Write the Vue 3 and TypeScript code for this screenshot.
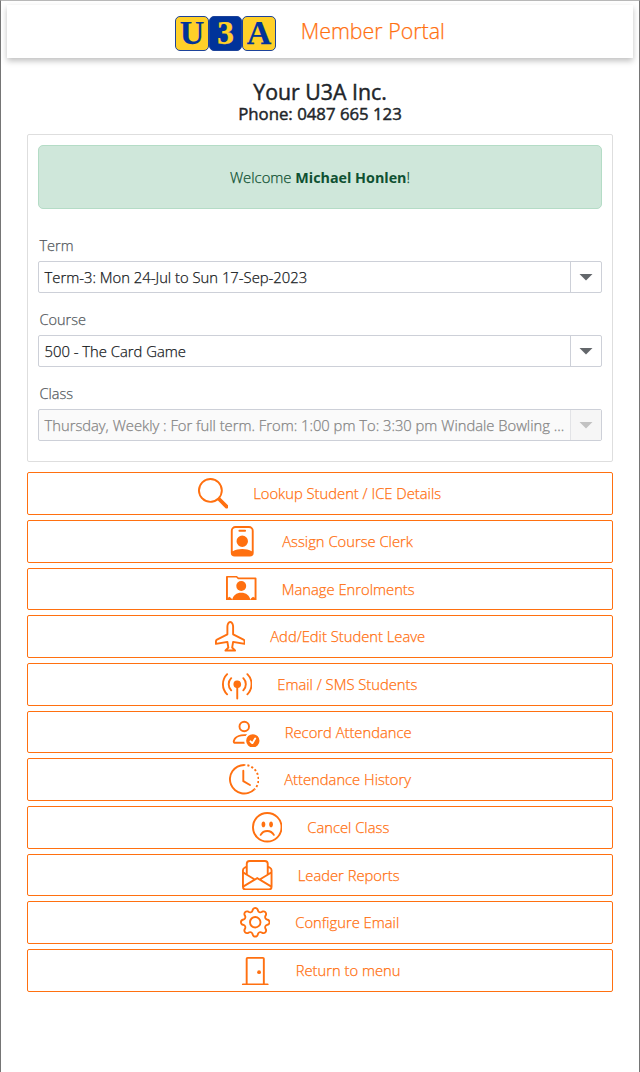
<script setup lang="ts">
interface Action {
  label: string
  key: string
  width: number
  paths: string[]
}

interface Field {
  label: string
  key: string
  value: string
  disabled?: boolean
}

const fields: Field[] = [
  { label: 'Term', key: 'term', value: 'Term-3: Mon 24-Jul to Sun 17-Sep-2023' },
  { label: 'Course', key: 'course', value: '500 - The Card Game' },
  { label: 'Class', key: 'class', value: 'Thursday, Weekly : For full term. From: 1:00 pm To: 3:30 pm Windale Bowling ...', disabled: true },
]

const actions: Action[] = [
  {
    label: 'Lookup Student / ICE Details', key: 'search', width: 189,
    paths: ['M11.742 10.344a6.5 6.5 0 1 0-1.397 1.398h-.001c.03.04.062.078.098.115l3.85 3.85a1 1 0 0 0 1.415-1.414l-3.85-3.85a1.007 1.007 0 0 0-.115-.1zM12 6.5a5.5 5.5 0 1 1-11 0 5.5 5.5 0 0 1 11 0z'],
  },
  {
    label: 'Assign Course Clerk', key: 'clerk', width: 131,
    paths: [
      'M6.5 2a.5.5 0 0 0 0 1h3a.5.5 0 0 0 0-1h-3zM11 8a3 3 0 1 1-6 0 3 3 0 0 1 6 0z',
      'M4.5 0A2.5 2.5 0 0 0 2 2.5V14a2 2 0 0 0 2 2h8a2 2 0 0 0 2-2V2.5A2.5 2.5 0 0 0 11.5 0h-7zM3 2.5A1.5 1.5 0 0 1 4.5 1h7A1.5 1.5 0 0 1 13 2.5v10.795a4.2 4.2 0 0 0-.776-.492C11.392 12.387 10.063 12 8 12s-3.392.387-4.224.803a4.2 4.2 0 0 0-.776.492V2.5z',
    ],
  },
  {
    label: 'Manage Enrolments', key: 'enrol', width: 132,
    paths: [
      'M10.6 6.3a2.6 2.6 0 1 1-5.2 0 2.6 2.6 0 0 1 5.2 0z',
      'M0 1.500Q0 1 .5 1H5.700L6.600 1.800H15.500Q16 1.800 16 2.300V13.700H12.600L13.200 12.700 14.200 11.900 15 12.500V2.700H6.300L5.400 1.900H1V12.500L1.800 11.900 2.800 12.700 3.400 13.700H0z',
      'M3.200 13.700C3.600 11.200 5.500 9.800 8 9.800s4.400 1.400 4.800 3.900z',
    ],
  },
  {
    label: 'Add/Edit Student Leave', key: 'leave', width: 155,
    paths: ['M6.428 1.151C6.708.591 7.213 0 8 0s1.292.592 1.572 1.151C9.861 1.73 10 2.431 10 3v3.691l5.17 2.585a1.5 1.5 0 0 1 .83 1.342V12a.5.5 0 0 1-.582.493l-5.507-.918-.375 2.253 1.318 1.318A.5.5 0 0 1 10.5 16h-5a.5.5 0 0 1-.354-.854l1.319-1.318-.376-2.253-5.507.918A.5.5 0 0 1 0 12v-1.382a1.5 1.5 0 0 1 .83-1.342L6 6.691V3c0-.568.14-1.271.428-1.849Zm.894.448C7.111 2.02 7 2.569 7 3v4a.5.5 0 0 1-.276.447l-5.448 2.724a.5.5 0 0 0-.276.447v.792l5.418-.903a.5.5 0 0 1 .575.41l.5 3a.5.5 0 0 1-.14.437L6.708 15h2.586l-.647-.646a.5.5 0 0 1-.14-.436l.5-3a.5.5 0 0 1 .576-.411L15 11.41v-.792a.5.5 0 0 0-.276-.447L9.276 7.447A.5.5 0 0 1 9 7V3c0-.432-.11-.979-.322-1.401C8.458 1.159 8.213 1 8 1c-.213 0-.458.158-.678.599Z'],
  },
  {
    label: 'Email / SMS Students', key: 'broadcast', width: 141,
    paths: ['M3.05 3.05a7 7 0 0 0 0 9.9.5.5 0 0 1-.707.707 8 8 0 0 1 0-11.314.5.5 0 0 1 .707.707zm2.122 2.122a4 4 0 0 0 0 5.656.5.5 0 1 1-.708.708 5 5 0 0 1 0-7.072.5.5 0 0 1 .708.708zm5.656-.708a.5.5 0 0 1 .708 0 5 5 0 0 1 0 7.072.5.5 0 1 1-.708-.708 4 4 0 0 0 0-5.656.5.5 0 0 1 0-.708zm2.122-2.12a.5.5 0 0 1 .707 0 8 8 0 0 1 0 11.313.5.5 0 0 1-.707-.707 7 7 0 0 0 0-9.9.5.5 0 0 1 0-.707zM6 8a2 2 0 1 1 2.5 1.937V15.5a.5.5 0 0 1-1 0V9.937A2 2 0 0 1 6 8z'],
  },
  {
    label: 'Record Attendance', key: 'attendance', width: 126,
    paths: [
      'M12.5 16a3.5 3.5 0 1 0 0-7 3.5 3.5 0 0 0 0 7Zm1.679-4.493-1.335 2.226a.75.75 0 0 1-1.174.144l-.774-.773a.5.5 0 0 1 .708-.708l.547.548 1.17-1.951a.5.5 0 1 1 .858.514ZM11 5a3 3 0 1 1-6 0 3 3 0 0 1 6 0ZM8 7a2 2 0 1 0 0-4 2 2 0 0 0 0 4Z',
      'M8.256 14a4.474 4.474 0 0 1-.229-1.004H3c.001-.246.154-.986.832-1.664C4.484 10.68 5.711 10 8 10c.26 0 .507.009.74.025.226-.341.496-.65.804-.918C9.077 9.038 8.564 9 8 9c-5 0-6 3-6 4s1 1 1 1h5.256Z',
    ],
  },
  {
    label: 'Attendance History', key: 'history', width: 127,
    paths: [
      'M8.515 1.019A7 7 0 0 0 8 1V0a8 8 0 0 1 .589.022l-.074.997zm2.004.45a7.003 7.003 0 0 0-.985-.299l.219-.976c.383.086.76.2 1.126.342l-.36.933zm1.37.71a7.01 7.01 0 0 0-.439-.27l.493-.87a8.025 8.025 0 0 1 .979.654l-.615.789a6.996 6.996 0 0 0-.418-.302zm1.834 1.79a6.99 6.99 0 0 0-.653-.796l.724-.69c.27.285.52.59.747.91l-.818.576zm.744 1.352a7.08 7.08 0 0 0-.214-.468l.893-.45a7.976 7.976 0 0 1 .45 1.088l-.95.313a7.023 7.023 0 0 0-.179-.483zm.53 2.507a6.991 6.991 0 0 0-.1-1.025l.985-.17c.067.386.106.778.116 1.17l-1 .025zm-.131 1.538c.033-.17.06-.339.081-.51l.993.123a7.957 7.957 0 0 1-.23 1.155l-.964-.267c.046-.165.086-.332.12-.501zm-.952 2.379c.184-.29.346-.594.486-.908l.914.405c-.16.36-.345.706-.555 1.038l-.845-.535zm-.964 1.205c.122-.122.239-.248.35-.378l.758.653a8.073 8.073 0 0 1-.401.432l-.707-.707z',
      'M8 1a7 7 0 1 0 4.95 11.95l.707.707A8.001 8.001 0 1 1 8 0v1z',
      'M7.5 3a.5.5 0 0 1 .5.5v5.21l3.248 1.856a.5.5 0 0 1-.496.868l-3.5-2A.5.5 0 0 1 7 9V3.5a.5.5 0 0 1 .5-.5z',
    ],
  },
  {
    label: 'Cancel Class', key: 'cancel', width: 81,
    paths: [
      'M8 15A7 7 0 1 1 8 1a7 7 0 0 1 0 14zm0 1A8 8 0 1 0 8 0a8 8 0 0 0 0 16z',
      'M4.285 12.433a.5.5 0 0 0 .683-.183A3.498 3.498 0 0 1 8 10.5c1.295 0 2.426.703 3.032 1.75a.5.5 0 0 0 .866-.5A4.498 4.498 0 0 0 8 9.5a4.5 4.5 0 0 0-3.898 2.25.5.5 0 0 0 .183.683zM7 6.5C7 7.328 6.552 8 6 8s-1-.672-1-1.5S5.448 5 6 5s1 .672 1 1.5zm4 0c0 .828-.448 1.5-1 1.5s-1-.672-1-1.5S9.448 5 10 5s1 .672 1 1.5z',
    ],
  },
  {
    label: 'Leader Reports', key: 'reports', width: 100,
    paths: ['M4 0a2 2 0 0 0-2 2v1.133l-.941.502A2 2 0 0 0 0 5.4V14a2 2 0 0 0 2 2h12a2 2 0 0 0 2-2V5.4a2 2 0 0 0-1.059-1.765L14 3.133V2a2 2 0 0 0-2-2H4Zm10 4.267.47.25A1 1 0 0 1 15 5.4v.817l-1 .6v-2.55Zm-1 3.15-3.75 2.25L8 8.917l-1.25.75L3 7.417V2a1 1 0 0 1 1-1h8a1 1 0 0 1 1 1v5.417Zm-11-.6-1-.6V5.4a1 1 0 0 1 .53-.882L2 4.267v2.55Zm13 .566v5.734l-4.778-2.867L15 7.383Zm-.035 6.88A1 1 0 0 1 14 15H2a1 1 0 0 1-.965-.738L8 10.083l6.965 4.18ZM1 13.116V7.383l4.778 2.867L1 13.117Z'],
  },
  {
    label: 'Configure Email', key: 'config', width: 105,
    paths: [
      'M8 4.754a3.246 3.246 0 1 0 0 6.492 3.246 3.246 0 0 0 0-6.492zM5.754 8a2.246 2.246 0 1 1 4.492 0 2.246 2.246 0 0 1-4.492 0z',
      'M9.796 1.343c-.527-1.79-3.065-1.79-3.592 0l-.094.319a.873.873 0 0 1-1.255.52l-.292-.16c-1.64-.892-3.433.902-2.54 2.541l.159.292a.873.873 0 0 1-.52 1.255l-.319.094c-1.79.527-1.79 3.065 0 3.592l.319.094a.873.873 0 0 1 .52 1.255l-.16.292c-.892 1.64.901 3.434 2.541 2.54l.292-.159a.873.873 0 0 1 1.255.52l.094.319c.527 1.79 3.065 1.79 3.592 0l.094-.319a.873.873 0 0 1 1.255-.52l.292.16c1.64.893 3.434-.902 2.54-2.541l-.159-.292a.873.873 0 0 1 .52-1.255l.319-.094c1.79-.527 1.79-3.065 0-3.592l-.319-.094a.873.873 0 0 1-.52-1.255l.16-.292c.893-1.64-.902-3.433-2.541-2.54l-.292.159a.873.873 0 0 1-1.255-.52l-.094-.319zm-2.633.283c.246-.835 1.428-.835 1.674 0l.094.319a1.873 1.873 0 0 0 2.693 1.115l.291-.16c.764-.415 1.6.42 1.184 1.185l-.159.292a1.873 1.873 0 0 0 1.116 2.692l.318.094c.835.246.835 1.428 0 1.674l-.319.094a1.873 1.873 0 0 0-1.115 2.693l.16.291c.415.764-.42 1.6-1.185 1.184l-.291-.159a1.873 1.873 0 0 0-2.693 1.116l-.094.318c-.246.835-1.428.835-1.674 0l-.094-.319a1.873 1.873 0 0 0-2.692-1.115l-.292.16c-.764.415-1.6-.42-1.184-1.185l.159-.291A1.873 1.873 0 0 0 1.945 8.93l-.319-.094c-.835-.246-.835-1.428 0-1.674l.319-.094A1.873 1.873 0 0 0 3.06 4.377l-.16-.292c-.415-.764.42-1.6 1.185-1.184l.292.159a1.873 1.873 0 0 0 2.692-1.115l.094-.319z',
    ],
  },
  {
    label: 'Return to menu', key: 'return', width: 104,
    paths: [
      'M3 2a1 1 0 0 1 1-1h8a1 1 0 0 1 1 1v13h1.5a.5.5 0 0 1 0 1h-13a.5.5 0 0 1 0-1H3V2zm1 13h8V2H4v13z',
      'M9 9a1 1 0 1 0 2 0 1 1 0 0 0-2 0z',
    ],
  },
]
</script>

<template>
  <main class="page">
    <header class="topbar">
      <div class="logo">
        <span class="tile">U</span>
        <span class="tile blue">3</span>
        <span class="tile">A</span>
      </div>
      <span class="portal">Member Portal</span>
    </header>

    <section class="heading">
      <h1>Your U3A Inc.</h1>
      <h2>Phone: 0487 665 123</h2>
    </section>

    <section class="panel">
      <div class="welcome"><span>Welcome <strong>Michael Honlen</strong>!</span></div>
      <div v-for="f in fields" :key="f.key" class="field">
        <label>{{ f.label }}</label>
        <div class="select" :class="{ disabled: f.disabled }">
          <span class="value">{{ f.value }}</span>
          <span class="toggle">
            <svg width="14" height="8" viewBox="0 0 14 8"><path d="M.5 1h13L7 7.500z" /></svg>
          </span>
        </div>
      </div>
    </section>

    <nav class="actions">
      <button v-for="a in actions" :key="a.key" type="button" class="action">
        <svg class="icon" viewBox="0 0 16 16"><path v-for="(d, i) in a.paths" :key="i" :d="d" /></svg>
        <span class="label" :style="{ width: a.width + 'px' }">{{ a.label }}</span>
      </button>
    </nav>
  </main>
</template>

<style>
body {
  background: #fff;
}
</style>

<style scoped>
.page {
  box-sizing: border-box;
  width: 640px;
  height: 1072px;
  border: 1px solid #757575;
  border-top-color: #b8b8b8;
  border-bottom: 0;
  padding: 4px 6px 0;
  font-family: "Open Sans", "Noto Sans", sans-serif;
  font-size: 14.8px;
  font-weight: 300;
  -webkit-text-stroke-width: 0.25px;
  color: #212529;
  overflow: hidden;
}
.topbar {
  box-sizing: border-box;
  height: 53px;
  display: flex;
  justify-content: center;
  align-items: flex-start;
  gap: 25px;
  padding: 11px 26px 0 0;
  background: #fff;
  box-shadow: 0 3px 6px rgba(0, 0, 0, 0.25);
}
.logo {
  display: flex;
  height: 35px;
  margin-left: 6px;
}
.tile {
  box-sizing: border-box;
  width: 33.500px;
  height: 35px;
  border: 1.500px solid #1c429a;
  border-radius: 5px;
  background: #ffd028;
  color: #00339a;
  font: bold 34px/32px "Liberation Serif", serif;
  text-align: center;
}
.tile.blue {
  background: #00339a;
  color: #ffd028;
}
.portal {
  width: 144px;
  font-size: 21.400px;
  line-height: 30px;
  color: #ff7010;
  white-space: nowrap;
}
.heading {
  height: 76px;
  padding-top: 21px;
  box-sizing: border-box;
  text-align: center;
}
.heading h1,
.heading h2 {
  margin: 0;
  font-weight: 400;
  -webkit-text-stroke-width: 0.45px;
}
.heading h1 {
  font-size: 21.3px;
  line-height: 25px;
}
.heading h2 {
  font-size: 16.800px;
  line-height: 20px;
}
.panel {
  box-sizing: border-box;
  height: 328px;
  margin: 0 20px;
  padding: 10px;
  border: 1px solid #dedede;
  border-radius: 2px;
}
.welcome {
  box-sizing: border-box;
  height: 64px;
  border: 1px solid #b4dcc6;
  border-radius: 5px;
  background: #cfe7da;
  color: #0f5132;
  display: flex;
  align-items: center;
  justify-content: center;
  margin-bottom: 26px;
}
.welcome strong {
  font-size: 14.300px;
  font-weight: 700;
  -webkit-text-stroke-width: 0;
}
.field {
  height: 74px;
}
label {
  display: block;
  height: 26px;
  line-height: 21px;
  padding-left: 1.500px;
  font-size: 14.500px;
  color: #555a60;
}
.select {
  box-sizing: border-box;
  height: 32px;
  border: 1px solid #cdd0d8;
  border-radius: 2px;
  display: flex;
  color: #16191c;
}
.value {
  flex: 1;
  min-width: 0;
  line-height: 31px;
  padding-left: 5.500px;
  white-space: nowrap;
  overflow: hidden;
}
.toggle {
  width: 30px;
  border-left: 1px solid #cdd0d8;
  display: flex;
  align-items: center;
  justify-content: center;
}
.toggle svg {
  fill: #63676b;
}
.disabled {
  background: #fafafa;
  color: #858585;
}
.disabled .value {
  font-size: 14.750px;
}
.disabled .toggle {
  background: #f6f6f6;
  border-color: #e2e3e6;
}
.disabled .toggle svg {
  fill: #c2c2c2;
}
.actions {
  margin: 10.330px 20px 0;
  display: flex;
  flex-direction: column;
  gap: 5px;
}
.action {
  box-sizing: border-box;
  height: 42.670px;
  padding: 0;
  border: 1px solid #ff7010;
  border-radius: 2px;
  background: #fff;
  color: #ff7010;
  font: 300 14.75px/20px "Open Sans", "Noto Sans", sans-serif;
  display: flex;
  align-items: center;
  justify-content: center;
  gap: 25px;
}
.icon {
  width: 30.500px;
  height: 30.500px;
  fill: #ff7010;
}
.label {
  white-space: nowrap;
  text-align: left;
  padding-bottom: 0.800px;
}
</style>
